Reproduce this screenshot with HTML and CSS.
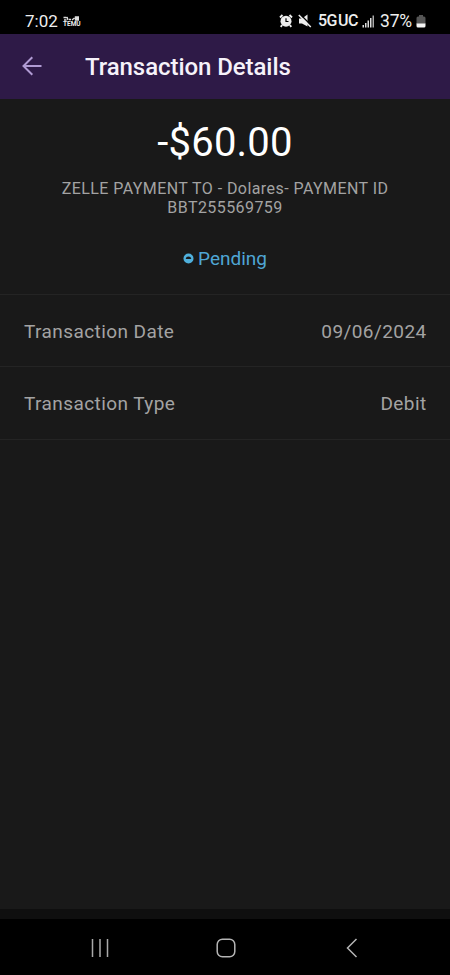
FILE: index.html
```html
<!DOCTYPE html>
<html lang="en">
<head>
<meta charset="utf-8">
<title>Transaction Details</title>
<link rel="stylesheet" href="styles.css">
</head>
<body>
<div class="screen">
  <div class="status">
    <span class="time">7:02</span>
    <span class="temu">
      <svg width="16" height="5" viewBox="0 0 16 5" fill="none" stroke="#ddd" stroke-width="1.400"><path d="M.5 1.500h3M1 4h2.500M4 1l1 3M6 3.500h2M9 4l2.500-2M12.500 1h3v3h-3zM12.500 2.500h3"/></svg>
      <span class="temu-text">TEMU</span>
    </span>
    <svg class="alarm" width="14" height="14" viewBox="0 0 14 14"><path d="M3.200 11 1.700 12.800M10.800 11l1.500 1.800M1 3.500 3.500 1M13 3.500 10.500 1" stroke="#eee" stroke-width="1.900"/><circle cx="7" cy="7.200" r="5.500" fill="#eee"/><path d="M7 4.200v3.300h2.500" fill="none" stroke="#000" stroke-width="1.200"/></svg>
    <svg class="mute" width="14" height="14" viewBox="0 0 14 14"><path d="M1 4.500h3l5.500-4v12L4 9.500H1z" fill="#eee"/><path d="M1.800 0 13.500 11.700" stroke="#000" stroke-width="1.500"/><path d="M.8 1 12.800 13" stroke="#eee" stroke-width="1.500"/></svg>
    <span class="net">5G</span><span class="uc">UC</span>
    <svg class="signal" width="13" height="13" viewBox="0 0 13 13" fill="#ddd"><path d="M.5 10H2v2.500H.5zM3 8h1.500v4.500H3zM5.500 5.500H7v7H5.500zM8 3h1.500v9.500H8z"/><path d="M10.500.5H12v12h-1.500z" fill="#aaa"/></svg>
    <span class="pct">37%</span>
    <svg class="battery" width="10" height="13" viewBox="0 0 10 13"><path d="M3 0h4v1.500h1Q9.500 1.500 9.500 3v6h-9V3Q.5 1.500 2 1.500h1z" fill="#555"/><path d="M.5 8.500h9V11q0 1.500-1.500 1.500H2Q.5 12.500.5 11z" fill="#f5f5f5"/></svg>
  </div>
  <header class="bar">
    <svg class="back" width="20" height="20" viewBox="0 0 20 20" fill="none" stroke="#b09bd3" stroke-width="2"><path d="M19.500 10H2M10.300 1.200 1.500 10l8.800 8.800"/></svg>
    <h1>Transaction Details</h1>
  </header>
  <main>
    <div class="summary">
      <div class="amount">-$60.00</div>
      <div class="desc">ZELLE PAYMENT TO - Dolares- PAYMENT ID<br>BBT255569759</div>
      <div class="pending">
        <svg width="11" height="11" viewBox="0 0 11 11"><circle cx="5.500" cy="5.500" r="5" fill="#4fb0dc"/><path d="M2.700 5.900Q3 3.600 5.500 3.600T8.300 5.900z" fill="#191919"/></svg>
        <span>Pending</span>
      </div>
    </div>
    <div class="row"><span class="label">Transaction Date</span><span class="value">09/06/2024</span></div>
    <div class="row last"><span class="label">Transaction Type</span><span class="value">Debit</span></div>
  </main>
  <div class="strip"></div>
  <nav>
    <svg width="20" height="20" viewBox="0 0 20 20" stroke="#aaa" stroke-width="1.500"><path d="M2.500 1v18M10 1v18M17.500 1v18"/></svg>
    <svg width="20" height="20" viewBox="0 0 20 20" fill="none" stroke="#b5b5b5" stroke-width="1.500"><rect x="1.200" y="1.200" width="17.600" height="17.600" rx="5.200"/></svg>
    <svg width="20" height="20" viewBox="0 0 20 20" fill="none" stroke="#b5b5b5" stroke-width="1.500"><path d="M14.500 1 5.500 10l9 9"/></svg>
  </nav>
</div>
</body>
</html>
```
FILE: styles.css
```css
* { box-sizing: border-box; }
body { margin: 0; background: #000; font-family: Roboto, sans-serif; }
svg { display: block; flex: none; }
.screen { width: 450px; height: 975px; display: flex; flex-direction: column; overflow: hidden; }
.status { height: 34px; flex: none; padding: 8px 24px 0 25px; display: flex; align-items: center; color: #eee; font-size: 17px; line-height: 24px; white-space: nowrap; }
.time { width: 38px; }
.temu { display: flex; flex-direction: column; width: 17px; }
.temu-text { font-size: 6.500px; line-height: 6px; font-weight: 700; }
.alarm { margin-left: auto; margin-right: 5px; }
.mute { margin-right: 6px; }
.net, .uc { font-weight: 500; font-size: 16px; width: 20px; letter-spacing: -.5px; }
.signal { margin: 0 5px 0 4px; }
.pct { width: 36px; font-size: 17.500px; letter-spacing: -.2px; }
.bar { height: 65px; flex: none; background: #2e1a47; display: flex; align-items: center; padding-left: 22px; }
.back { margin-top: -1px; }
.bar h1 { margin: 0 0 0 43px; font-size: 24px; font-weight: 500; color: #f6f2fa; letter-spacing: -.07px; white-space: nowrap; }
main { flex: 1; background: #191919; color: #a3a3a3; }
.summary { height: 196px; border-bottom: 1px solid #242424; text-align: center; padding-top: 20px; white-space: nowrap; }
.amount { color: #fff; font-size: 40px; line-height: 48px; letter-spacing: .2px; }
.desc { margin-top: 12px; font-size: 16px; line-height: 19px; letter-spacing: .43px; }
.pending { margin-top: 31px; display: flex; justify-content: center; align-items: center; gap: 4px; color: #4fa6d5; font-size: 19px; line-height: 22px; letter-spacing: 0; }
.pending svg { margin-top: -2px; }
.row { height: 72px; border-bottom: 1px solid #242424; display: flex; justify-content: space-between; align-items: center; padding: 1px 24px 0; font-size: 19px; letter-spacing: .42px; }
.last { height: 73px; }
.value { margin-right: -.6px; }
.strip { height: 10px; flex: none; background: #0f0f0f; }
nav { height: 56px; flex: none; padding: 1px 88px 0 90px; display: flex; justify-content: space-between; align-items: center; }
```
